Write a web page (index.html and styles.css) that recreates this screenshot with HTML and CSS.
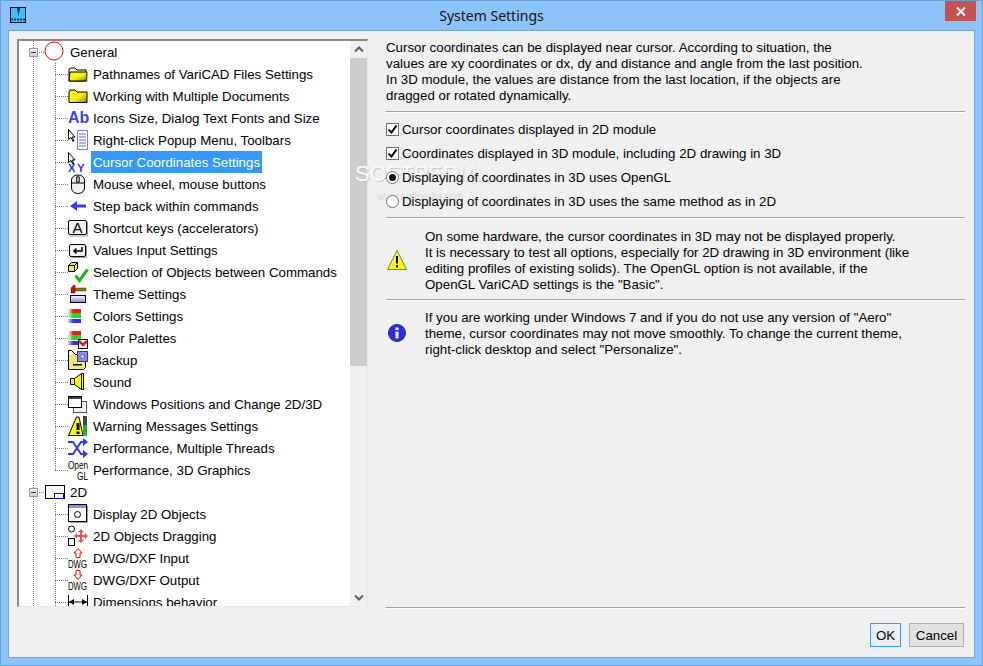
FILE: index.html
```html
<!DOCTYPE html>
<html lang="en">
<head>
<meta charset="utf-8">
<title>System Settings</title>
<link rel="stylesheet" href="styles.css">
</head>
<body>
<div class="window">
  <header class="titlebar">
    <svg class="app-icon" width="16" height="16" viewBox="0 0 16 16"><rect x=".5" y=".5" width="15" height="15" fill="#35c4f4" stroke="#000"/><path d="M7 1l1.500 9L10 1z" fill="#003a7a"/><path d="M1 12.500h14" stroke="#003a7a" stroke-width="2" stroke-dasharray="2 1"/></svg>
    <div class="title">System Settings</div>
    <div class="close"><svg width="10" height="9" viewBox="0 0 10 9"><path d="M1 .5l8 8M9 .5l-8 8" stroke="#fff" stroke-width="2"/></svg></div>
  </header>
  <div class="client">
    <div class="tree">
      <div class="rows">
        <div class="row parent"><span class="trunk"><span class="expander"></span></span><svg class="icon" width="20" height="22" viewBox="0 0 20 22"><circle cx="9" cy="10" r="9" fill="#fff" stroke="#f00"/></svg><span class="label">General</span></div>

        <div class="row"><span class="spine"></span><span class="branch"></span><svg class="icon" width="20" height="22" viewBox="0 0 20 22"><defs><linearGradient id="fold" x1="0" y1="0" x2="1" y2="1"><stop offset="0" stop-color="#ffff00"/><stop offset=".55" stop-color="#f4f000"/><stop offset="1" stop-color="#8a8400"/></linearGradient></defs><path d="M1 18V6l2-1h4l2 2h9v11z" fill="#fff" stroke="#000"/><path d="M1 18l1-9h17l-1 9z" fill="url(#fold)" stroke="#000"/><path d="M19 9v10" stroke="#888"/></svg><span class="label">Pathnames of VariCAD Files Settings</span></div>

        <div class="row"><span class="spine"></span><span class="branch"></span><svg class="icon" width="20" height="22" viewBox="0 0 20 22"><path d="M1 17.500V7l1-2h5l2 2h10v10.500z" fill="url(#fold)" stroke="#000"/></svg><span class="label">Working with Multiple Documents</span></div>

        <div class="row"><span class="spine"></span><span class="branch"></span><svg class="icon" width="20" height="22" viewBox="0 0 20 22"><text x="0" y="16" class="ab">Ab</text></svg><span class="label">Icons Size, Dialog Text Fonts and Size</span></div>

        <div class="row"><span class="spine"></span><span class="branch"></span><svg class="icon" width="20" height="22" viewBox="0 0 20 22"><path d="M.5.500v10l2.500-2 2 4 1-.5-2-4h3z" fill="#fff" stroke="#000"/><path d="M9.500 1.500h10v19h-10z" fill="#fff" stroke="#7b7bf0"/><path d="M11 5h7M11 8h7M11 11h7M11 14h7M11 17h7" stroke="#9a9af0" stroke-width="1.500"/></svg><span class="label">Right-click Popup Menu, Toolbars</span></div>

        <div class="row"><span class="spine"></span><span class="branch"></span><svg class="icon" width="20" height="22" viewBox="0 0 20 22"><path d="M.5 1.500v10l2.500-2 2 4 1-.5-2-4h3z" fill="#fff" stroke="#000"/><text x="0" y="21" class="xy">XY</text></svg><span class="label selected">Cursor Coordinates Settings</span></div>

        <div class="row"><span class="spine"></span><span class="branch"></span><svg class="icon" width="20" height="22" viewBox="0 0 20 22"><path d="M3.500 10V7a6 5 0 0 1 6-5h1a6 5 0 0 1 6 5v8a6 5.500 0 0 1-6 5.500h-1a6 5.500 0 0 1-6-5.500z" fill="#f4f0f0" stroke="#000"/><path d="M3.500 10h13M10 2v8" stroke="#000"/><rect x="8.500" y="4" width="3" height="5" fill="#aaa" stroke="#000" stroke-width=".7"/></svg><span class="label">Mouse wheel, mouse buttons</span></div>

        <div class="row"><span class="spine"></span><span class="branch"></span><svg class="icon" width="20" height="22" viewBox="0 0 20 22"><path d="M2 11l7-5v3.500h9v3H9V16z" fill="#3a3aff"/></svg><span class="label">Step back within commands</span></div>

        <div class="row"><span class="spine"></span><span class="branch"></span><svg class="icon" width="20" height="22" viewBox="0 0 20 22"><rect x=".5" y="3.500" width="18" height="14" rx="1.500" fill="#f4f4f4" stroke="#000"/><path d="M19.500 5v14H2" fill="none" stroke="#999"/><text x="9.500" y="16" class="key">A</text></svg><span class="label">Shortcut keys (accelerators)</span></div>

        <div class="row"><span class="spine"></span><span class="branch"></span><svg class="icon" width="20" height="22" viewBox="0 0 20 22"><rect x="1.500" y="5.500" width="16" height="12" rx="1.500" fill="#f4f4f4" stroke="#000"/><path d="M18.500 7v11.500H3" fill="none" stroke="#999"/><path d="M14 8v4H6M8.500 9.500L6 12l2.500 2.500" fill="none" stroke="#000" stroke-width="1.500"/></svg><span class="label">Values Input Settings</span></div>

        <div class="row"><span class="spine"></span><span class="branch"></span><svg class="icon" width="20" height="22" viewBox="0 0 20 22"><path d="M.5 4.500l3-3h6v6l-3 3h-6z" fill="#eee060" stroke="#000"/><path d="M.5 4.500h6v6M6.500 4.500l3-3" fill="none" stroke="#000"/><path d="M7.500 14.500l4 5 8-11" fill="none" stroke="#1eb81e" stroke-width="3"/></svg><span class="label">Selection of Objects between Commands</span></div>

        <div class="row"><span class="spine"></span><span class="branch"></span><svg class="icon" width="20" height="22" viewBox="0 0 20 22"><path d="M3 10V5l3-3h1v8z" fill="#d01010" stroke="#700" stroke-width=".5"/><rect x="7" y="5" width="11" height="3" fill="#857a00" stroke="#333" stroke-width=".5"/><defs><linearGradient id="theme" x1="0" y1="0" x2="0" y2="1"><stop offset="0" stop-color="#fff"/><stop offset="1" stop-color="#7d7dee"/></linearGradient></defs><rect x="2.500" y="12.500" width="15" height="7" fill="url(#theme)" stroke="#000"/></svg><span class="label">Theme Settings</span></div>

        <div class="row"><span class="spine"></span><span class="branch"></span><svg class="icon" width="20" height="22" viewBox="0 0 20 22"><defs><linearGradient id="r"><stop offset="0" stop-color="#fff"/><stop offset=".4" stop-color="#f01818"/></linearGradient><linearGradient id="g"><stop offset="0" stop-color="#d8ffd8"/><stop offset=".4" stop-color="#16e016"/></linearGradient><linearGradient id="b"><stop offset="0" stop-color="#d8d8ff"/><stop offset=".4" stop-color="#3030ff"/></linearGradient></defs><rect y="4" width="13" height="4" fill="url(#r)"/><rect y="8" width="13" height="5" fill="url(#g)"/><rect y="14" width="13" height="4" fill="url(#b)"/></svg><span class="label">Colors Settings</span></div>

        <div class="row"><span class="spine"></span><span class="branch"></span><svg class="icon" width="20" height="22" viewBox="0 0 20 22"><rect y="4" width="13" height="4" fill="url(#r)"/><rect y="8" width="13" height="5" fill="url(#g)"/><rect y="14" width="13" height="4" fill="url(#b)"/><rect x="10.500" y="12.500" width="9" height="9" fill="#fff" stroke="#000"/><path d="M11 14l4 4 4-4" fill="none" stroke="#e01818" stroke-width="2.500"/></svg><span class="label">Color Palettes</span></div>

        <div class="row"><span class="spine"></span><span class="branch"></span><svg class="icon" width="20" height="22" viewBox="0 0 20 22"><path d="M.5 1.500h3l4 4h10v13l-2 2h-15z" fill="#f2e878" stroke="#000"/><rect x="5" y="15" width="9" height="1.500" fill="#000"/><path d="M1 2h3v4H1z" fill="#fff"/><rect x="9.500" y="2.500" width="10" height="10" fill="#8a8af5" stroke="#3030b0"/><rect x="13" y="6" width="3" height="3" fill="#fff" stroke="#3030b0" stroke-width=".5"/></svg><span class="label">Backup</span></div>

        <div class="row"><span class="spine"></span><span class="branch"></span><svg class="icon" width="20" height="22" viewBox="0 0 20 22"><path d="M2.500 7.500h4l7-5h2v16h-2l-7-5h-4z" fill="#ffff00" stroke="#000"/><path d="M6.500 7.500v6M13.500 3v15" stroke="#000"/></svg><span class="label">Sound</span></div>

        <div class="row"><span class="spine"></span><span class="branch"></span><svg class="icon" width="20" height="22" viewBox="0 0 20 22"><rect x="5.500" y="8.500" width="13" height="11" fill="#f0f0f0" stroke="#555"/><rect x=".5" y="3.500" width="13" height="11" fill="#fff" stroke="#000"/><path d="M1 5h12" stroke="#000" stroke-width="1.500"/></svg><span class="label">Windows Positions and Change 2D/3D</span></div>

        <div class="row"><span class="spine"></span><span class="branch"></span><svg class="icon" width="20" height="22" viewBox="0 0 20 22"><path d="M.5 20.500L8.500 2h2.500l4 18.500z" fill="#ffff00" stroke="#000"/><path d="M8.500 8h3v7h-3zM8.500 16.500h3V19h-3z" fill="#000"/><rect x="15" y="1" width="4" height="9" fill="#444"/><rect x="15" y="10" width="4" height="11" fill="#1eb81e"/></svg><span class="label">Warning Messages Settings</span></div>

        <div class="row"><span class="spine"></span><span class="branch"></span><svg class="icon" width="20" height="22" viewBox="0 0 20 22"><path d="M0 5h5l8 12h3M0 17h5l8-12h3" fill="none" stroke="#3434ff" stroke-width="2"/><path d="M15 1l5 4-5 4zM15 13l5 4-5 4z" fill="#3434ff"/></svg><span class="label">Performance, Multiple Threads</span></div>

        <div class="row"><span class="spine"></span><span class="branch last"></span><svg class="icon" width="20" height="22" viewBox="0 0 20 22"><text x="0" y="10" class="small" textLength="20" lengthAdjust="spacingAndGlyphs">Open</text><text x="9" y="21" class="small" textLength="11" lengthAdjust="spacingAndGlyphs">GL</text></svg><span class="label">Performance, 3D Graphics</span></div>

        <div class="row parent"><span class="trunk"><span class="expander"></span></span><svg class="icon" width="20" height="22" viewBox="0 0 20 22"><rect x=".5" y="4.500" width="19" height="13" fill="#fff6f6" stroke="#000"/><rect x="9.500" y="12.500" width="9" height="5" fill="#fff" stroke="#0000c8"/></svg><span class="label">2D</span></div>

        <div class="row"><span class="spine"></span><span class="branch"></span><svg class="icon" width="20" height="22" viewBox="0 0 20 22"><rect x=".5" y="1.500" width="18" height="17" fill="#fff" stroke="#000"/><rect x="1" y="2" width="17" height="3" fill="#8e8ee8"/><circle cx="9.500" cy="11.500" r="3" fill="#fff" stroke="#000"/><path d="M19.500 3v16.500H2" fill="none" stroke="#999"/></svg><span class="label">Display 2D Objects</span></div>

        <div class="row"><span class="spine"></span><span class="branch"></span><svg class="icon" width="20" height="22" viewBox="0 0 20 22"><circle cx="3.500" cy="4" r="3" fill="#fff" stroke="#000"/><rect x=".5" y="13.500" width="6" height="7" fill="#fff" stroke="#000"/><path d="M13 4l3 3h-2v3h3V8l3 3-3 3v-2h-3v3h2l-3 3-3-3h2v-3H9v2l-3-3 3-3v2h3V7h-2z" fill="#f25050"/></svg><span class="label">2D Objects Dragging</span></div>

        <div class="row"><span class="spine"></span><span class="branch"></span><svg class="icon" width="20" height="22" viewBox="0 0 20 22"><path d="M10 1.500l4 4.500h-2v4.500H8V6H6z" fill="#fff" stroke="#f00"/><text x="0" y="21" class="small" textLength="19" lengthAdjust="spacingAndGlyphs">DWG</text></svg><span class="label">DWG/DXF Input</span></div>

        <div class="row"><span class="spine"></span><span class="branch"></span><svg class="icon" width="20" height="22" viewBox="0 0 20 22"><path d="M10 10.500L14 6h-2V1.500H8V6H6z" fill="#fff" stroke="#f00"/><text x="0" y="21" class="small" textLength="19" lengthAdjust="spacingAndGlyphs">DWG</text></svg><span class="label">DWG/DXF Output</span></div>

        <div class="row"><span class="spine"></span><span class="branch"></span><svg class="icon" width="20" height="22" viewBox="0 0 20 22"><path d="M.5 4v14M19.500 4v14M1 11h18" stroke="#000"/><path d="M1 11l5-3v6zM19 11l-5-3v6z" fill="#000"/></svg><span class="label">Dimensions behavior</span></div>
      </div>
      <div class="scrollbar">
        <div class="arrow"><svg width="10" height="7" viewBox="0 0 10 7"><path d="M1 5.500l4-4 4 4" fill="none" stroke="#606060" stroke-width="2"/></svg></div>
        <div class="thumb"></div>
        <div class="track"></div>
        <div class="arrow"><svg width="10" height="7" viewBox="0 0 10 7"><path d="M1 1.500l4 4 4-4" fill="none" stroke="#606060" stroke-width="2"/></svg></div>
      </div>
    </div>

    <div class="panel">
      <p class="text">Cursor coordinates can be displayed near cursor. According to situation, the<br>values are xy coordinates or dx, dy and distance and angle from the last position.<br>In 3D module, the values are distance from the last location, if the objects are<br>dragged or rotated dynamically.</p>
      <div class="sep"></div>
      <div class="options">
        <div class="option"><span class="check"><svg width="11" height="11" viewBox="0 0 11 11"><path d="M1.500 5.500l3 3 5-7" fill="none" stroke="#000" stroke-width="2"/></svg></span>Cursor coordinates displayed in 2D module</div>
        <div class="option"><span class="check"><svg width="11" height="11" viewBox="0 0 11 11"><path d="M1.500 5.500l3 3 5-7" fill="none" stroke="#000" stroke-width="2"/></svg></span>Coordinates displayed in 3D module, including 2D drawing in 3D</div>
        <div class="option"><span class="radio on"></span>Displaying of coordinates in 3D uses OpenGL</div>
        <div class="option"><span class="radio"></span>Displaying of coordinates in 3D uses the same method as in 2D</div>
      </div>
      <div class="sep"></div>
      <div class="note warn">
        <svg class="note-icon" width="22" height="22" viewBox="0 0 22 22"><path d="M11 1.500L20.500 20.500H1.500z" fill="#ffff00" stroke="#777" stroke-linejoin="round"/><path d="M10 7h2v7.500h-2zM10 16h2v2.500h-2z" fill="#000"/></svg>
        <p class="text">On some hardware, the cursor coordinates in 3D may not be displayed properly.<br>It is necessary to test all options, especially for 2D drawing in 3D environment (like<br>editing profiles of existing solids). The OpenGL option is not available, if the<br>OpenGL VariCAD settings is the "Basic".</p>
      </div>
      <div class="sep"></div>
      <div class="note info">
        <svg class="note-icon" width="22" height="22" viewBox="0 0 22 22"><circle cx="11" cy="11" r="8.500" fill="#2a2aff" stroke="#333"/><path d="M9.500 5.500h3v2.500h-3zM9.500 9.500h3v7h-3z" fill="#fff"/></svg>
        <p class="text">If you are working under Windows 7 and if you do not use any version of "Aero"<br>theme, cursor coordinates may not move smoothly. To change the current theme,<br>right-click desktop and select "Personalize".</p>
      </div>
      <div class="spacer"></div>
      <div class="sep"></div>
      <div class="buttons">
        <div class="button default">OK</div>
        <div class="button">Cancel</div>
      </div>
    </div>
    <div class="watermark">SOFTPEDIA<small>www.softpedia.com</small></div>
  </div>
</div>
</body>
</html>
```
FILE: styles.css
```css
* { box-sizing: border-box; }
html, body { margin: 0; padding: 0; overflow: hidden; }
body {
  width: 983px;
  height: 666px;
  font-family: "Liberation Sans", Arial, sans-serif;
  font-size: 13.3px;
  color: #000;
}
.window {
  width: 983px;
  height: 666px;
  display: flex;
  flex-direction: column;
  background: #8ac4fb;
  border: 1px solid #6b9fd3;
  padding: 0 7px 7px;
}
.titlebar {
  position: relative;
  height: 29px;
  flex: none;
  display: flex;
  align-items: center;
  justify-content: center;
}
.app-icon { position: absolute; left: 2px; top: 6px; }
.title { font-family: "Noto Sans", sans-serif; font-size: 14px; color: #111; }
.close {
  position: absolute;
  right: -1px;
  top: 0;
  width: 31px;
  height: 20px;
  background: #c75050;
  display: flex;
  align-items: center;
  justify-content: center;
}
.client {
  position: relative;
  flex: 1;
  min-height: 0;
  display: flex;
  background: #f0f0f0;
  border: 1px solid #6fa5d8;
  padding: 8px 9px 0 8px;
  gap: 18px;
}
.tree {
  flex: none;
  width: 351px;
  height: 568px;
  display: flex;
  background: #fff;
  border-style: solid;
  border-width: 2px 1px 1px 2px;
  border-color: #8a8a8a #e8e8e8 #e8e8e8 #8a8a8a;
}
.rows { flex: 1; min-width: 0; overflow: hidden; }
.row { height: 22px; display: flex; align-items: center; white-space: nowrap; }
.icon { flex: none; overflow: visible; margin-right: 3px; }
.trunk, .spine, .branch { flex: none; height: 22px; }
.spine {
  margin-left: 14px;
  width: 22px;
  background: repeating-linear-gradient(180deg, #808080 0 1px, transparent 1px 2px) left top / 1px 100% no-repeat;
}
.branch {
  width: 13px;
  background:
    repeating-linear-gradient(180deg, #808080 0 1px, transparent 1px 2px) left top / 1px 100% no-repeat,
    repeating-linear-gradient(90deg, #808080 0 1px, transparent 1px 2px) left 11px / 100% 1px no-repeat;
}
.branch.last {
  background:
    repeating-linear-gradient(180deg, #808080 0 1px, transparent 1px 2px) left top / 1px 12px no-repeat,
    repeating-linear-gradient(90deg, #808080 0 1px, transparent 1px 2px) left 11px / 100% 1px no-repeat;
}
.trunk {
  position: relative;
  width: 26px;
  background:
    repeating-linear-gradient(180deg, #808080 0 1px, transparent 1px 2px) 14px top / 1px 100% no-repeat,
    repeating-linear-gradient(90deg, #808080 0 1px, transparent 1px 2px) 14px 11px / 12px 1px no-repeat;
}
.expander {
  position: absolute;
  left: 10px;
  top: 7px;
  width: 9px;
  height: 9px;
  background: linear-gradient(#f4f4f4, #d4d4d4);
  border: 1px solid #8f9aa8;
}
.expander::after {
  content: "";
  position: absolute;
  left: 1px;
  top: 3px;
  width: 5px;
  height: 1px;
  background: #333;
}
.label { padding: 1px 2px 0; line-height: 22px; height: 22px; }
.label.selected { background: #3399ff; color: #fff; }
.ab { font: bold 16px "Liberation Sans", sans-serif; fill: #3f3fff; }
.xy { font: bold 11px "Liberation Sans", sans-serif; fill: #2f2ff0; letter-spacing: 2px; }
.key { font: 15px "Liberation Sans", sans-serif; text-anchor: middle; fill: #000; }
.small { font: 11.500px "Liberation Sans", sans-serif; fill: #000; }
.scrollbar { flex: none; width: 17px; display: flex; flex-direction: column; background: #f0f0f0; }
.arrow { flex: none; height: 17px; display: flex; align-items: center; justify-content: center; }
.thumb { flex: none; height: 308px; background: #cdcdcd; }
.track { flex: 1; }
.panel { position: relative; z-index: 1; flex: 1; min-width: 0; display: flex; flex-direction: column; }
.text { margin: 0 0 -1px; padding-top: 1px; line-height: 16px; white-space: nowrap; }
.sep { flex: none; height: 2px; background: #a0a0a0; border-bottom: 1px solid #fff; margin-top: 8px; }
.options { display: flex; flex-direction: column; margin-top: 4px; margin-bottom: -4px; }
.option { height: 24px; display: flex; align-items: center; white-space: nowrap; }
.check, .radio {
  flex: none;
  width: 13px;
  height: 13px;
  margin-right: 3px;
  background: #fff;
  border: 1px solid #707070;
  display: flex;
  align-items: center;
  justify-content: center;
}
.radio { border-radius: 50%; box-shadow: 0 0 2px #fff; }
.radio.on::after { content: ""; width: 7px; height: 7px; border-radius: 50%; background: #111; }
.note { display: flex; align-items: center; }
.note-icon { flex: none; margin-right: 17px; }
.warn { margin-top: 9px; margin-bottom: -1px; }
.info { margin-top: 8px; }
.spacer { flex: 1; }
.buttons { display: flex; justify-content: flex-end; gap: 8px; margin-top: 14px; margin-bottom: 10px; padding-right: 1px; }
.button {
  height: 24px;
  width: 55px;
  display: flex;
  align-items: center;
  justify-content: center;
  background: #e1e1e1;
  border: 1px solid #adadad;
}
.button.default { width: 31px; background: #ebeff3; border-color: #3399ff; }
.watermark {
  position: absolute;
  left: 346px;
  top: 130px;
  font: 22px "Liberation Sans", sans-serif;
  color: #fbfbfb;
  text-shadow: 1px 1px 1px #c4c4c4;
  pointer-events: none;
}
.watermark small { display: block; margin: 4px 0 0 22px; font-size: 10px; color: #d8d8d8; text-shadow: none; }
```
